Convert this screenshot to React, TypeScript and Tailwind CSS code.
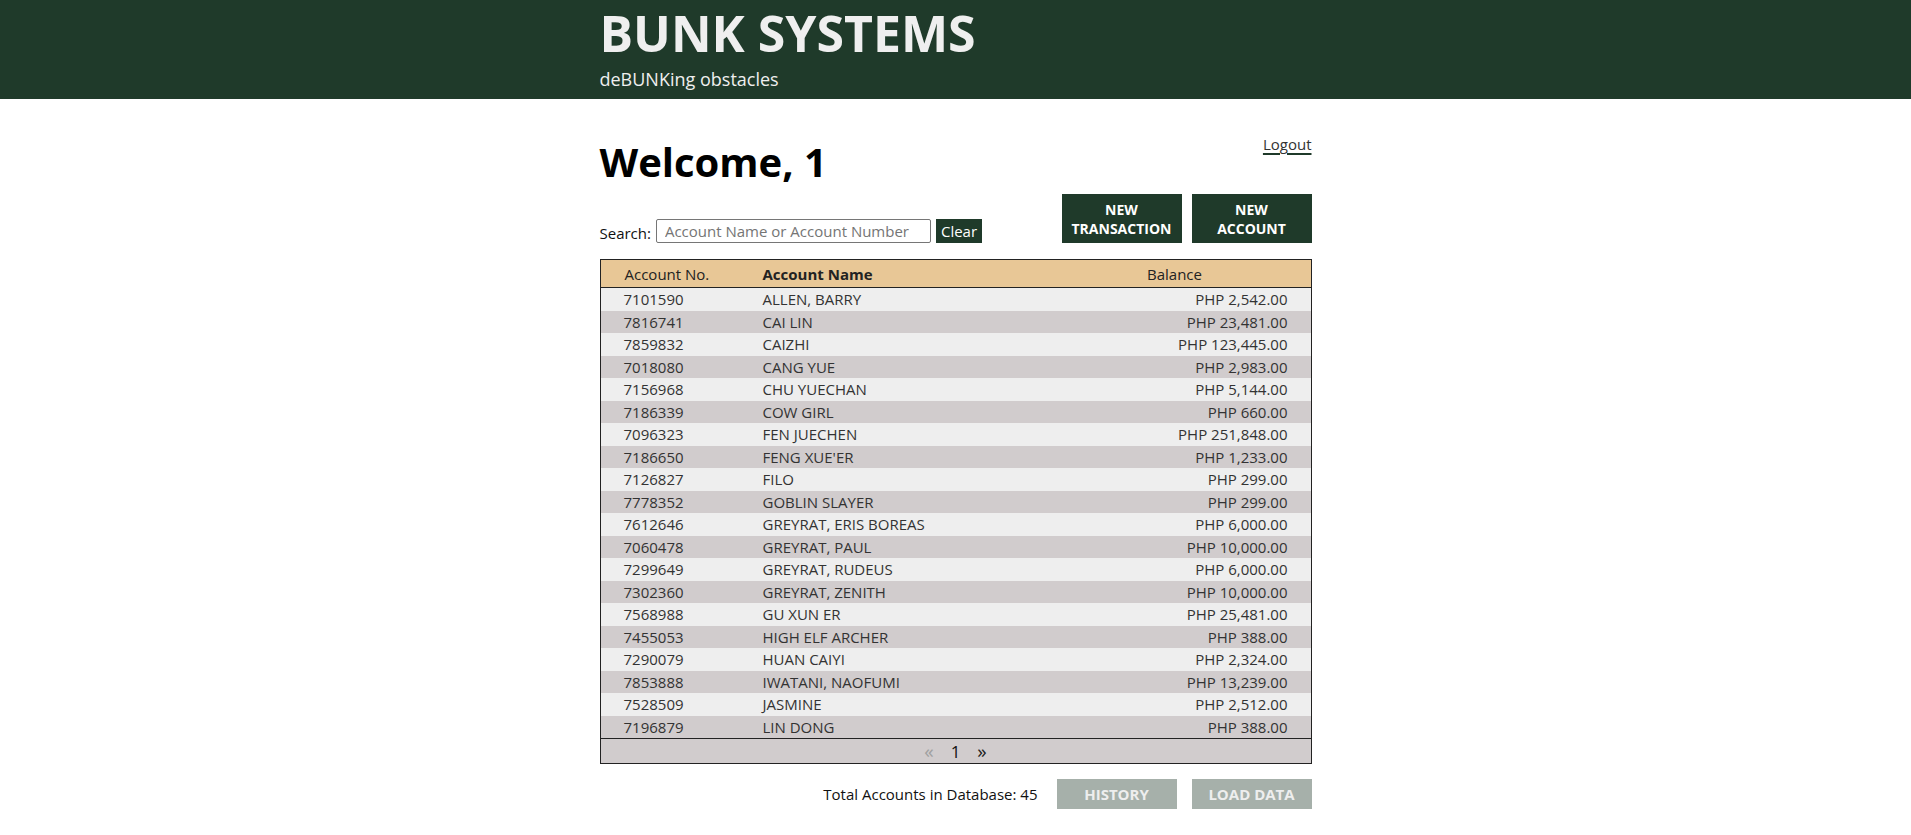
const rows: [string, string, string][] = [
  ['7101590', 'ALLEN, BARRY', 'PHP 2,542.00'],
  ['7816741', 'CAI LIN', 'PHP 23,481.00'],
  ['7859832', 'CAIZHI', 'PHP 123,445.00'],
  ['7018080', 'CANG YUE', 'PHP 2,983.00'],
  ['7156968', 'CHU YUECHAN', 'PHP 5,144.00'],
  ['7186339', 'COW GIRL', 'PHP 660.00'],
  ['7096323', 'FEN JUECHEN', 'PHP 251,848.00'],
  ['7186650', "FENG XUE'ER", 'PHP 1,233.00'],
  ['7126827', 'FILO', 'PHP 299.00'],
  ['7778352', 'GOBLIN SLAYER', 'PHP 299.00'],
  ['7612646', 'GREYRAT, ERIS BOREAS', 'PHP 6,000.00'],
  ['7060478', 'GREYRAT, PAUL', 'PHP 10,000.00'],
  ['7299649', 'GREYRAT, RUDEUS', 'PHP 6,000.00'],
  ['7302360', 'GREYRAT, ZENITH', 'PHP 10,000.00'],
  ['7568988', 'GU XUN ER', 'PHP 25,481.00'],
  ['7455053', 'HIGH ELF ARCHER', 'PHP 388.00'],
  ['7290079', 'HUAN CAIYI', 'PHP 2,324.00'],
  ['7853888', 'IWATANI, NAOFUMI', 'PHP 13,239.00'],
  ['7528509', 'JASMINE', 'PHP 2,512.00'],
  ['7196879', 'LIN DONG', 'PHP 388.00'],
];

function Header() {
  return (
    <header className="bg-[#1f3a2a] h-[99px]">
      <div className="w-[712px] mx-auto pt-[8px]">
        <h1 className="text-[50px] leading-[50px] font-bold text-[#efefef]">BUNK SYSTEMS</h1>
        <p className="mt-[9px] text-[18px] leading-[25px] text-[#efefef]">deBUNKing obstacles</p>
      </div>
    </header>
  );
}

function AccountsTable() {
  return (
    <div className="mt-[16px] border border-[#222]">
      {/* Column headers */}
      <div className="flex h-[28px] items-center bg-[#e8c796] border-b border-[#222] text-[#222] pt-px">
        <div className="w-[162px] pl-[24px]">Account No.</div>
        <div className="flex-1 font-bold">Account Name</div>
        <div className="w-[272px] text-center">Balance</div>
      </div>

      {rows.map(([no, name, balance], i) => (
        <div
          key={no}
          className={`flex h-[22.5px] items-center text-[#333] ${i % 2 === 0 ? 'bg-[#eeeeee]' : 'bg-[#d1cccd]'}`}
        >
          <div className="w-[162px] pl-[23px]">{no}</div>
          <div className="flex-1">{name}</div>
          <div className="w-[272px] text-right pr-[23px]">{balance}</div>
        </div>
      ))}

      {/* Pagination */}
      <div className="flex h-[25px] items-center justify-center bg-[#d1cccd] border-t border-[#222]">
        <span className="text-[#a0a0a0] text-[19px] leading-[25px]">«</span>
        <span className="mx-[17px] text-[17px] leading-[25px] text-[#111]">1</span>
        <span className="text-[#222] text-[19px] leading-[25px]">»</span>
      </div>
    </div>
  );
}

export default function App() {
  return (
    <div className="min-h-screen bg-white font-['Open_Sans',sans-serif] text-[15px] leading-[1.5]">
      <Header />

      <main className="w-[712px] mx-auto">
        <div className="flex justify-between items-start pt-[36px]">
          <h2 className="mt-[3px] text-[40px] leading-[48px] font-bold text-black">Welcome, 1</h2>
          <a href="#" className="-mt-[2px] text-[#333] leading-[22px] underline decoration-[#1f3a2a] decoration-2 underline-offset-[3px]">
            Logout
          </a>
        </div>

        <div className="mt-[8px] flex justify-between items-end">
          <div className="flex items-end">
            <span className="leading-[20px] text-[#111]">Search:</span>
            <input
              type="text"
              placeholder="Account Name or Account Number"
              className="ml-[5px] w-[275px] h-[24px] border border-[#767676] rounded-[2px] px-[8px] text-[15px] placeholder:text-[#757575] outline-none"
            />
            <button className="ml-[5px] h-[24px] px-[5px] bg-[#1f3a2a] text-white leading-[20px]">Clear</button>
          </div>

          <div className="flex gap-[10px]">
            <button className="w-[120px] h-[49px] bg-[#1f3a2a] text-white text-[14px] font-bold leading-[19px] text-center">
              NEW
              <br />
              TRANSACTION
            </button>
            <button className="w-[120px] h-[49px] bg-[#1f3a2a] text-white text-[14px] font-bold leading-[19px] text-center">
              NEW
              <br />
              ACCOUNT
            </button>
          </div>
        </div>

        <AccountsTable />

        <div className="mt-[15px] flex justify-end items-center">
          <span className="text-[#111]">Total Accounts in Database: 45</span>
          <button className="ml-[19px] w-[120px] h-[30px] bg-[#a6b0aa] text-[#eeeeee] text-[15px] font-bold">HISTORY</button>
          <button className="ml-[15px] w-[120px] h-[30px] bg-[#a6b0aa] text-[#eeeeee] text-[15px] font-bold">LOAD DATA</button>
        </div>
      </main>
    </div>
  );
}
